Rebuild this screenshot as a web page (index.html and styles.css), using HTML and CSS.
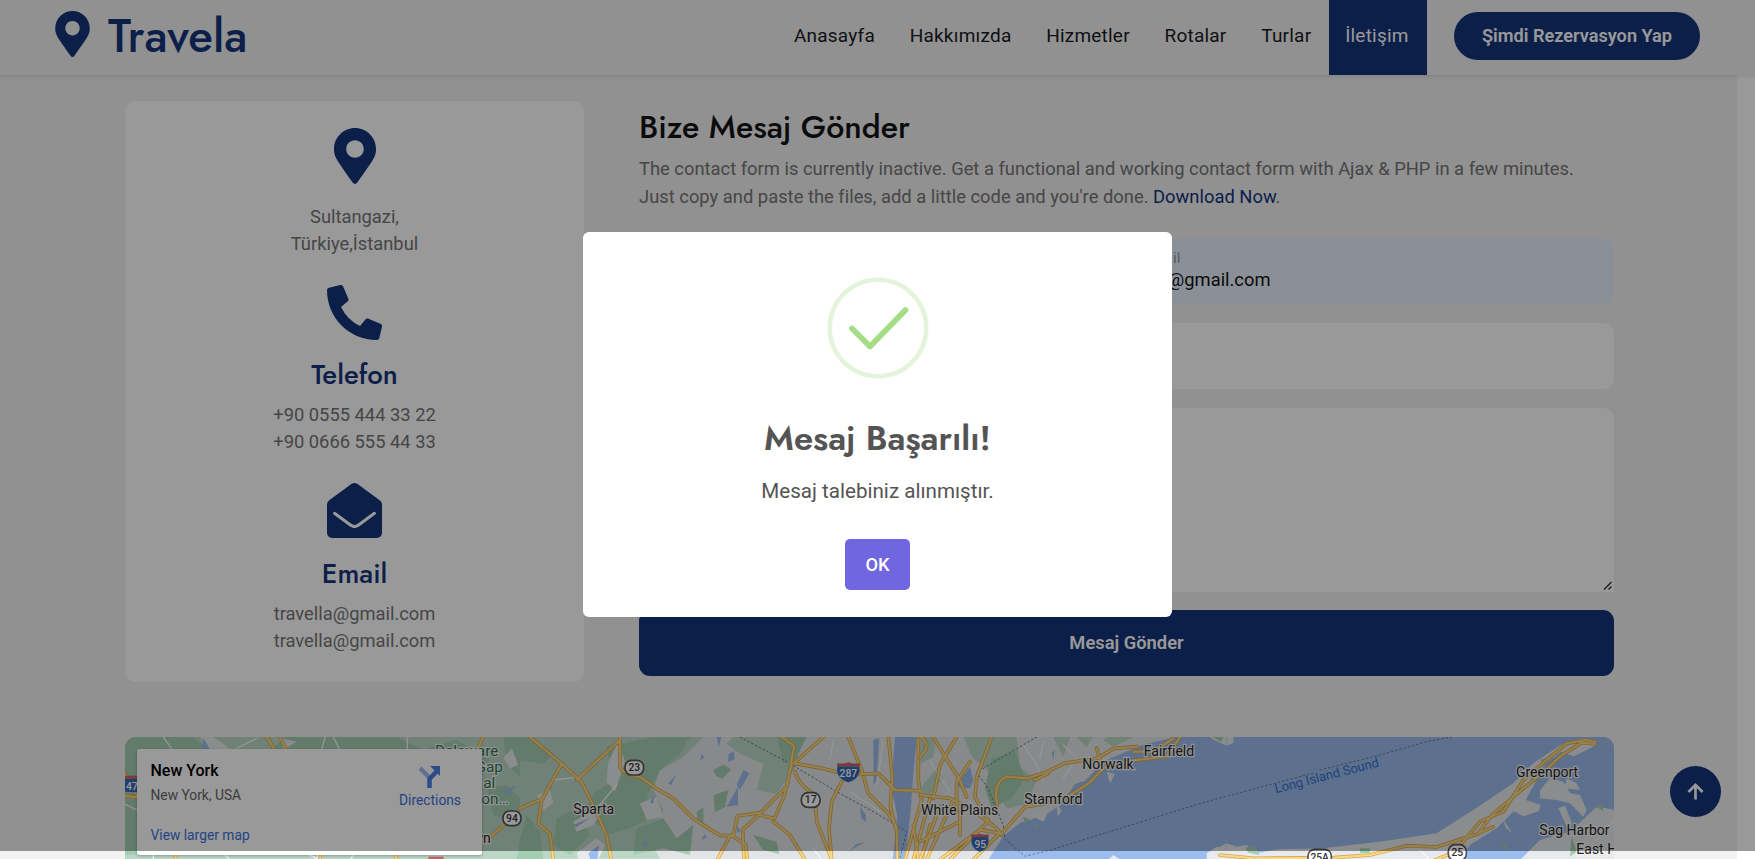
FILE: index.html
```html
<!DOCTYPE html>
<html lang="tr">
<head>
<meta charset="utf-8">
<title>Travela</title>
<link rel="stylesheet" href="styles.css">
</head>
<body>
<header class="navbar">
  <a class="brand">
    <svg class="brand-pin" viewBox="0 0 384 512"><path d="M172.268 501.67C26.97 291.031 0 269.413 0 192 0 85.961 85.961 0 192 0s192 85.961 192 192c0 77.413-26.97 99.031-172.268 309.67-9.535 13.774-29.93 13.773-39.464 0zM192 272c44.183 0 80-35.817 80-80s-35.817-80-80-80-80 35.817-80 80 35.817 80 80 80z"/></svg>
    <span class="brand-name">Travela</span>
  </a>
  <nav class="links">
    <a>Anasayfa</a><a>Hakkımızda</a><a>Hizmetler</a><a>Rotalar</a><a>Turlar</a><a class="active">İletişim</a>
  </nav>
  <a class="reserve">Şimdi Rezervasyon Yap</a>
</header>
<main class="page">
  <div class="content">
    <section class="info">
      <svg class="icon pin" viewBox="0 0 384 512"><path d="M172.268 501.67C26.97 291.031 0 269.413 0 192 0 85.961 85.961 0 192 0s192 85.961 192 192c0 77.413-26.97 99.031-172.268 309.67-9.535 13.774-29.93 13.773-39.464 0zM192 272c44.183 0 80-35.817 80-80s-35.817-80-80-80-80 35.817-80 80 35.817 80 80 80z"/></svg>
      <p class="address">Sultangazi,<br>Türkiye,İstanbul</p>
      <svg class="icon" viewBox="0 0 512 512"><path d="M497.39 361.8l-112-48a24 24 0 0 0-28 6.9l-49.6 60.6A370.66 370.66 0 0 1 130.6 204.11l60.6-49.6a23.94 23.94 0 0 0 6.9-28l-48-112A24.16 24.16 0 0 0 122.6.61l-104 24A24 24 0 0 0 0 48c0 256.5 207.9 464 464 464a24 24 0 0 0 23.4-18.6l24-104a24.29 24.29 0 0 0-14.01-27.6z"/></svg>
      <h4 class="phone-title">Telefon</h4>
      <p class="phones">+90 0555 444 33 22<br>+90 0666 555 44 33</p>
      <svg class="icon" viewBox="0 0 512 512"><path d="M512 464c0 26.51-21.49 48-48 48H48c-26.51 0-48-21.49-48-48V200.724a48 48 0 0 1 18.387-37.776c24.913-19.529 45.501-35.365 164.2-121.511C199.412 29.17 232.797-.347 256 .003c23.198-.354 56.596 29.172 73.413 41.433 118.687 86.137 139.303 101.995 164.2 121.512A48 48 0 0 1 512 200.724z"/><path class="crease" d="M70 282l126 93c18 13 40 31 60 31s42-18 60-31l126-93"/></svg>
      <h4 class="mail-title">Email</h4>
      <p>travella@gmail.com<br>travella@gmail.com</p>
    </section>
    <section class="contact">
      <h3>Bize Mesaj Gönder</h3>
      <p class="intro">The contact form is currently inactive. Get a functional and working contact form with Ajax &amp; PHP in a few minutes. Just copy and paste the files, add a little code and you're done. <a>Download Now</a>.</p>
      <div class="pair">
        <div class="field filled"></div>
        <div class="field filled email"><span class="label">Email</span><span class="value">a.@gmail.com</span></div>
      </div>
      <div class="field subject"></div>
      <div class="field message">
        <svg class="grip" viewBox="0 0 9 9"><path d="M1 8.5L8.5 1M5.5 8.5l3-3"/></svg>
      </div>
      <div class="send">Mesaj Gönder</div>
    </section>
  </div>
  <section class="map">
    <svg class="map-art" viewBox="0 0 1489 122">
      <rect class="land" width="1489" height="122"/>
      <!-- western hills -->
      <g transform="translate(-5 -12) scale(.33333)">
        <path class="park" d="M0 30H1240V410H0z"/>
        <path class="park2" d="M0 30h210l60 45h180l50-40h330l80 40 100-30 100 60-30 60-60-20V300l-90 90H0z"/>
        <path class="park2" d="M1150 36h70l30 60-50 60-40-40zM1100 190l60-10 60 60-40 50-60-20z"/>
        <path class="ground" d="M240 36h40l50 36h-60zM1175 70l20 50-25 10-20-30zM480 40l50 10-40 25z"/>
        <path class="water" d="M250 40l18 30-22 2zM1200 60l30-16-25 40zM1150 200l40-20-30 30z"/>
        <path class="lane" d="M130 36l35 50M350 70l60-30M615 36l-10 40M862 36v40M0 230l50 25M640 36l20 40M100 380v25M310 385l20 20M560 385l30 15 10-20M700 388l-10 20"/>
        <path class="road-edge" d="M440 36l28 44M480 36l22 42M1090 36l-20 40M0 120l50 90M0 210l60 8M170 380l-4 24M605 380l-5 24M820 380l12 24M1270 220l-90 55-80 70"/>
        <path class="road" d="M440 36l28 44M480 36l22 42M1090 36l-20 40M0 120l50 90M0 210l60 8M170 380l-4 24M605 380l-5 24M820 380l12 24M1270 220l-90 55-80 70"/>
        <path class="shield" d="M15 160h42v42l-42-2z"/><path class="shield-top" d="M15 152h42v10H15z"/><path class="shield-top" d="M925 395h46v12h-46z"/>
        <text class="shield-text" x="36" y="194">47</text>
      </g>
      <!-- New Jersey and the Hudson -->
      <g transform="translate(395 -12) scale(.33333)">
        <path class="park" d="M0 36h550l-60 60-70 40-20 60 30 60-40 90 30 55H0zM640 36h170l30 70-70 100-60-10 20-80-70-30-40-30z"/>
        <path class="park2" d="M-20 36h60l60 50-30 30-70-10zM400 36h110l-30 50-60 50-40 80 20 60-60 30-70 20-80-60 30-60 60-40-20-100zM20 270l40 50 10 84H-10l10-60zM110 280l60-30 40 80-60 60-50-30zM350 310l80-30 40 60 50-40-10 90-80-20-90 20zM580 210l45-14-10 50-30 15zM580 135l30-16 24 14-26 28-20-8zM700 330l70 20 8 38-50-14zM770 36h90l-30 60-40 20zM530 260l20-12v60l-18-16z"/>
        <path class="ground" d="M265 110l30-60 20 60-30 90-25-30zM50 210l40-15 10 40-30 20zM160 290l50-30 30 10-20 30-50 20zM360 235l50-20 20 60-50 10zM170 385l60-45 25 20-20 44h-60z"/>
        <path class="water" d="M590 36h14l-8 30zM545 85l8 14-12 6zM625 88l16-10 4 24-20 10zM670 135l18 10-28 50-10-15zM620 245l34-60v55zM445 175l24-26-16 32zM390 235l14-30-4 30zM160 300l50-22-40 28zM205 385l32-24-5 43h-20zM500 315l12 25-12-8zM545 345l8-18 8 10zM1060 45l18-6-8 125-9 16zM1020 245l18 25v20l-14-10zM985 382l24-25 28-6-30 15zM650 300l12 20-10 4zM365 360l20-18-8 26zM1125 36h65l-10 110-8 110-16 148h-38l14-130-18-90z"/>
        <path class="lane" d="M100 165l70-8M940 45l-10 60M990 200l90 60M1090 50l-20 130M880 370l25 34M290 180l-60 70 20 70"/>
        <path class="border" d="M660 36L800 110 950 200 1060 260 1160 320 1140 400"/>
        <path class="road-edge" d="M30 36l95 80 60 55 35 70 40 90 14 74M125 116l-60 110-10 70 35 30 10 78M300 45L170 165M300 36v90q5 20 60 30l50 35 50 30 60 60 80 50 40 2 12-60 70-10 80-80 20-120-40-30v-30M910 36l-90 80M592 404l40-75 45 30 5 45M672 404l-4-90 50-45 45 12 30-70 22-90M760 290l50 40 45 74M825 115l80 15 80 20 90-5 50 50 70 2 35 15M985 36l40 100 20 70 60 60 25 40 2 100M965 170l-30 60-8 80 8 94M1105 36l12 120 -6 90 18 70M825 140q10 40 60 70l5 80 45 114M0 250l70-30M1195 36v130l10 60-50 178M1230 220l-50 184M1180 300l15 104M1230 300l-25 104"/>
        <path class="road" d="M30 36l95 80 60 55 35 70 40 90 14 74M125 116l-60 110-10 70 35 30 10 78M300 45L170 165M300 36v90q5 20 60 30l50 35 50 30 60 60 80 50 40 2 12-60 70-10 80-80 20-120-40-30v-30M910 36l-90 80M592 404l40-75 45 30 5 45M672 404l-4-90 50-45 45 12 30-70 22-90M760 290l50 40 45 74M825 115l80 15 80 20 90-5 50 50 70 2 35 15M985 36l40 100 20 70 60 60 25 40 2 100M965 170l-30 60-8 80 8 94M1105 36l12 120 -6 90 18 70M825 140q10 40 60 70l5 80 45 114M0 250l70-30M1195 36v130l10 60-50 178M1230 220l-50 184M1180 300l15 104M1230 300l-25 104"/>
        <rect class="route" x="315" y="106" width="56" height="44" rx="20"/><text class="route-text" x="343" y="138">23</text>
        <rect class="route" x="844" y="203" width="56" height="44" rx="20"/><text class="route-text" x="872" y="235">17</text>
        <path class="shield" d="M952 124h66q6 36-33 48-39-12-33-48z"/><path class="shield-top" d="M953 114q16 4 32-2 16 6 34 2l2 10h-70z"/><text class="shield-text" x="985" y="157">287</text>
        <text class="place" x="221" y="267" text-anchor="middle">Sparta</text>
      </g>
      <!-- labels over the western hills -->
      <g transform="translate(-5 -12) scale(.33333)">
        <g class="place-green" text-anchor="end"><text x="1135" y="92">Delaware</text><text x="1149" y="142">Gap</text><text x="1126" y="190">al</text><text x="1166" y="238">on…</text></g>
        <text class="place" x="1112" y="354" text-anchor="end">wn</text>
        <rect class="route" x="1149" y="258" width="54" height="44" rx="20"/><text class="route-text" x="1176" y="290">94</text>
      </g>
      <!-- Westchester, Connecticut shore and the Sound -->
      <g transform="translate(795 -12) scale(.33333)">
        <path class="park" d="M0 36h50l-10 60-40 20zM130 36h160l10 90 50 40-30 70-60 15-20-40-40-80-40-30zM400 36h50l-20 60zM560 36h80l-60 30-30-20zM470 36h50l-20 30zM0 190l50-60 20 30-50 60z"/>
        <path class="park2" d="M215 100l70-20 30 80-40 60-60 30-20-60z"/>
        <path class="water" d="M860 36H1500V404H205l45-70 50-40 40-12 20-20 20 5 45-30 40-60 30-10 60-60 60-25 60-25 70-15 30-20 40-20z"/>
        <path class="ground" d="M870 36h70v18l-20 8-40-18zM330 270l60-20-20 40zM410 235l15 22-12 18zM560 140l10 35 14-28zM580 390l-15 14h36zM890 370l30-15 30 10 30-5 30 25 60-12 500-10v50H890z"/>
        <path class="park2" d="M878 36h34l-10 14zM975 368l30-5 20 40h-25zM310 275l22 10-18 10zM340 295l18 5-10 8z"/>
        <path class="water" d="M105 185l45-60 10 40-10 25zM395 85l8-10-2 30z"/>
        <path class="lane" d="M310 60l40 60 20 50M370 50l-10 50M430 60l40 40-40 60M30 110l60 90M150 230l60 60"/>
        <path class="lane thin" d="M920 36v368"/>
        <path class="border" d="M350 36L170 142l35 50 45 110 5 40 60 52 80-20 450-140 380-102"/>
        <path class="road-edge" d="M0 36q40 20 0 60M40 36l30 50 50 80 20 50M110 36L60 120l-20 100M215 36l-45 120-5 60 40 70M150 110l-40 60v90M0 210l90 10 60 30 80 60 15 20M232 240q-15-70 30-85l60 5 60-20 50-25 100-15 50-30 70-5M345 165l40-20M60 404l120-90 65 12 70-80 110-20 80-50 50-50 90-20 80-10M640 80h60l60-40M530 70l12 40M780 36l-40 60M0 404l60-160M20 404l80-180M0 350l120-60M90 404l110-110M160 404l75-75M120 260v70"/>
        <path class="road" d="M0 36q40 20 0 60M40 36l30 50 50 80 20 50M110 36L60 120l-20 100M215 36l-45 120-5 60 40 70M150 110l-40 60v90M0 210l90 10 60 30 80 60 15 20M232 240q-15-70 30-85l60 5 60-20 50-25 100-15 50-30 70-5M345 165l40-20M60 404l120-90 65 12 70-80 110-20 80-50 50-50 90-20 80-10M640 80h60l60-40M530 70l12 40M780 36l-40 60M0 404l60-160M20 404l80-180M0 350l120-60M90 404l110-110M160 404l75-75M120 260v70"/>
        <path class="shield" d="M156 336h48q8 32-24 45-32-13-24-45z"/><path class="shield-top" d="M155 328q12 3 25-2 13 5 25 2l2 9h-54z"/><text class="shield-text" x="181" y="369">95</text>
        <g class="place" text-anchor="middle"><text x="119" y="270">White Plains</text><text x="400" y="238">Stamford</text><text x="564" y="131">Norwalk</text><text x="747" y="93">Fairfield</text></g>
      </g>
      <!-- Long Island -->
      <g transform="translate(1195 -177) scale(.33333)">
        <path class="water" d="M-20 530H900V900H-20z"/>
        <path class="ground" d="M-340 880l30-20 130 25 140-15 160-18 80-10 150-22 110-70 120-80 60-60 90-60 60-15 42 8-10 16-60 30-40-14-50 40-30 60-25 45 45 15-6 18-45 16-30-15-50 50-80 50-40 60H-340zM660 690l30-35 40 10 20 35 30 5 20 45-10 20-40-40-40-10-50-5zM715 745l20-8 20 50-5 35zM735 685l5-30 30 15 10 20zM610 890l50-50 90-25 80-75 55 10v150H600zM548 778l30 42-20-15zM680 590l20-20 10 20z"/>
        <path class="park2" d="M825 740l20-8 5 20zM755 830l15 45-20 15zM120 865h30v14h-30zM540 845l18 10v20zM660 600l30-10-10 25zM630 660l20-20v30z"/>
        <path class="lane" d="M300 870l30 30M880 780l-50 60"/>
        <path class="border" d="M0 630L180 585 320 545 400 530"/>
        <path class="road-edge" d="M-300 885l100 10 240-2 110-8 110-28 90 4 80-26 45-14 40-55 70-60 80-65 60-55 60-38 40 4M345 900l60-25 75-90 70-30 60-95 70-60 60-50 60-10 25 6M475 820l45-20"/>
        <path class="road" d="M-300 885l100 10 240-2 110-8 110-28 90 4 80-26 45-14 40-55 70-60 80-65 60-55 60-38 40 4M345 900l60-25 75-90 70-30 60-95 70-60 60-50 60-10 25 6M475 820l45-20"/>
        <rect class="route" x="385" y="854" width="54" height="48" rx="20"/><text class="route-text" x="412" y="889">25</text>
        <rect class="route" x="-36" y="868" width="70" height="48" rx="20"/><text class="route-text" x="-1" y="902">25A</text>
        <g class="place"><text x="588" y="650">Greenport</text><text x="658" y="825">Sag Harbor</text><text x="769" y="882">East Hampton</text></g>
        <text class="sea" transform="translate(-132 700) rotate(-14.6)">Long Island Sound</text>
      </g>
    </svg>
    <div class="place-card">
      <div class="place-text"><strong>New York</strong><span>New York, USA</span><a>View larger map</a></div>
      <div class="directions">
        <svg viewBox="0 0 22 23"><path class="faint" d="M1 3l9 9"/><path d="M10.500 23V14L18 6"/><path class="head" d="M11 1h10v10z"/></svg>
        <a>Directions</a>
      </div>
    </div>
  </section>
</main>
<div class="scroll-track"></div>
<a class="to-top"><svg viewBox="0 0 18 18"><path d="M9 17.500V2.500M1.500 9.500L9 2l7.500 7.500"/></svg></a>
<div class="backdrop"></div>
<div class="dialog">
  <svg class="success" viewBox="0 0 102 102"><circle cx="51" cy="51" r="48.200"/><path d="M25 51.500L43 69.500L78.500 33"/></svg>
  <h2>Mesaj Başarılı!</h2>
  <p>Mesaj talebiniz alınmıştır.</p>
  <button>OK</button>
</div>
</body>
</html>
```

FILE: styles.css
```css
* { box-sizing: border-box; }
html, body { margin: 0; height: 859px; overflow: hidden; }
body {
  background: #f2f2f2;
  color: #757575;
  font-family: Roboto, sans-serif;
  font-size: 18.34px;
  line-height: 27.5px;
}
h2, h3, h4, p { margin: 0; }
h2, h3, h4, .brand-name { font-family: Jost, Lato, sans-serif; }

.navbar {
  position: relative;
  z-index: 2;
  display: flex;
  align-items: center;
  height: 75px;
  padding: 0 55px;
  background: #f2f2f2;
  box-shadow: 0 1px 4px rgba(0, 0, 0, .12);
}
.brand { display: flex; align-items: center; color: #13357b; }
.brand-pin { width: 35px; height: 46px; margin: -7px 18px 0 0; fill: #13357b; }
.brand-name { margin-top: -3px; font-size: 45.8px; font-weight: 500; line-height: 64px; }
.links { display: flex; margin-left: auto; height: 75px; color: #191c24; }
.links a { padding: 0 17.350px; line-height: 71px; font-size: 19px; letter-spacing: .22px; }
.links .active { padding: 0 18.300px 0 16.500px; background: #13357b; color: #fff; }
.reserve {
  width: 246px;
  height: 48px;
  margin: -3px 0 0 27px;
  border-radius: 24px;
  background: #13357b;
  color: #fff;
  font-weight: 600;
  font-size: 18.15px;
  line-height: 48px;
  text-align: center;
}

.page { padding: 26px 0 0 125px; width: 1614px; }
.content { display: flex; gap: 55px; height: 581px; }
.info {
  width: 459px;
  padding-top: 27px;
  border-radius: 11px;
  background: #fff;
  text-align: center;
}
.icon { display: block; width: 55px; height: 55px; margin: 0 auto; fill: #13357b; }
.icon.pin { width: 42px; height: 56px; }
.crease { fill: none; stroke: #fff; stroke-width: 28; stroke-linecap: round; }
.address { margin: 18.500px 0 27px; }
.info h4 { color: #13357b; font-size: 27.5px; font-weight: 500; line-height: 34px; }
.phone-title { margin: 18.5px 0 8.5px; }
.phones { margin-bottom: 27.5px; }
.mail-title { margin: 18.5px 0 9px; }

.contact { width: 975px; color: #757575; }
.contact h3 { margin-top: 7px; color: #111; font-size: 32.1px; font-weight: 500; line-height: 38px; }
.intro { width: 950px; margin-top: 9px; font-size: 18.37px; }
.intro a { color: #13357b; }
.pair { display: grid; grid-template-columns: 1fr 1fr; gap: 18px; margin-top: 28px; }
.field { border-radius: 11px; background: #fff; }
.filled { height: 66px; background: #e8f0fe; }
.email { display: flex; flex-direction: column; padding-top: 9px; align-items: flex-start; }
.label { width: 45px; height: 22px; font-size: 15.500px; line-height: 22px; text-align: right; color: #999; }
.value { width: 135px; text-align: right; color: #111; line-height: 22px; }
.subject { height: 66px; margin-top: 18.5px; }
.message { display: flex; align-items: flex-end; justify-content: flex-end; height: 184px; margin-top: 19px; padding: 2px; border-bottom-right-radius: 0; }
.grip { width: 9px; height: 9px; fill: none; stroke: #333; stroke-width: 1.4; }
.send { height: 66px; margin-top: 18px; border-radius: 11px; background: #13357b; color: #fff; font-weight: 600; line-height: 66px; text-align: center; }

.map { position: relative; width: 1489px; height: 122px; margin-top: 55px; border-radius: 11px 11px 0 0; overflow: hidden; }
.map-art { display: block; width: 1489px; height: 122px; font-family: Roboto, sans-serif; }
.land { fill: #e2e4e8; }
.ground { fill: #e8eaed; }
.park { fill: #bbd8c6; }
.park2 { fill: #a3ceb2; }
.water { fill: #9bbcef; }
.road, .road-edge, .lane, .border { fill: none; stroke-linejoin: round; stroke-linecap: round; }
.road-edge { stroke: #d9a94f; stroke-width: 11; }
.road { stroke: #fad986; stroke-width: 6; }
.lane { stroke: #f6f8f8; stroke-width: 4; }
.thin { stroke: #adc6ee; stroke-width: 2; }
.border { stroke: #6c7a8a; stroke-width: 3; stroke-dasharray: 5 8; }
.place, .place-green { font-size: 42px; fill: #252525; stroke: #f4f4f4; stroke-width: 7; paint-order: stroke; }
.place-green { font-size: 46px; fill: #2f7550; }
.route { fill: #fff; stroke: #555; stroke-width: 5; }
.route-text, .shield-text { font-size: 31px; font-weight: 500; text-anchor: middle; fill: #333; }
.shield { fill: #3668b7; }
.shield-top { fill: #cf6267; }
.shield-text { fill: #fff; }
.sea { font-size: 39px; fill: #356fca; }
.place-card {
  position: absolute;
  left: 12px;
  top: 12px;
  display: flex;
  justify-content: space-between;
  width: 345px;
  height: 106px;
  padding: 9.500px 21px 0 13.500px;
  border-radius: 2px;
  background: #fff;
  box-shadow: 0 1px 3px rgba(0, 0, 0, .3);
  font-size: 13.8px;
}
.place-text { display: flex; flex-direction: column; line-height: 24.300px; }
.place-text strong { color: #000; font-size: 16px; font-weight: 500; }
.place-text span { color: #666; }
.place-text a { margin-top: 16px; }
.place-card a { color: #3b72dc; }
.directions { display: flex; flex-direction: column; align-items: center; padding-top: 6px; }
.directions svg { width: 22px; height: 23px; fill: none; stroke: #4a7de2; stroke-width: 4.500; }
.directions .faint { stroke: #a5bcf0; }
.directions .head { fill: #4a7de2; stroke: none; }
.directions a { line-height: 24px; }

.scroll-track { position: absolute; left: 1737px; top: 75px; width: 18px; height: 784px; background: #fff; }
.to-top { position: absolute; left: 1670px; top: 766px; display: grid; place-items: center; width: 51px; height: 51px; border-radius: 50%; background: #13357b; }
.to-top svg { width: 17px; height: 17px; fill: none; stroke: #fff; stroke-width: 2.800; }
.backdrop { position: absolute; z-index: 3; left: 0; top: 0; width: 1755px; height: 851px; background: rgba(0, 0, 0, .4); }
.dialog {
  position: absolute;
  z-index: 4;
  left: 583px;
  top: 232px;
  display: flex;
  flex-direction: column;
  align-items: center;
  width: 589px;
  height: 385px;
  padding-top: 45px;
  border-radius: 6px;
  background: #fff;
  color: #545454;
}
.success { width: 102px; height: 102px; fill: none; stroke: #e4f4db; stroke-width: 4.500; }
.success path { stroke: #a5dc86; stroke-width: 5.700; stroke-linecap: round; stroke-linejoin: round; }
.dialog h2 { margin-top: 35.5px; font-size: 34.500px; font-weight: 600; line-height: 46px; }
.dialog p { margin-top: 14px; font-size: 20.600px; line-height: 32px; }
.dialog button { width: 65px; height: 51px; margin-top: 32px; padding: 0; border: 0; border-radius: 5px; background: #7066e0; color: #fff; font: 500 18.300px Roboto, sans-serif; }
```
